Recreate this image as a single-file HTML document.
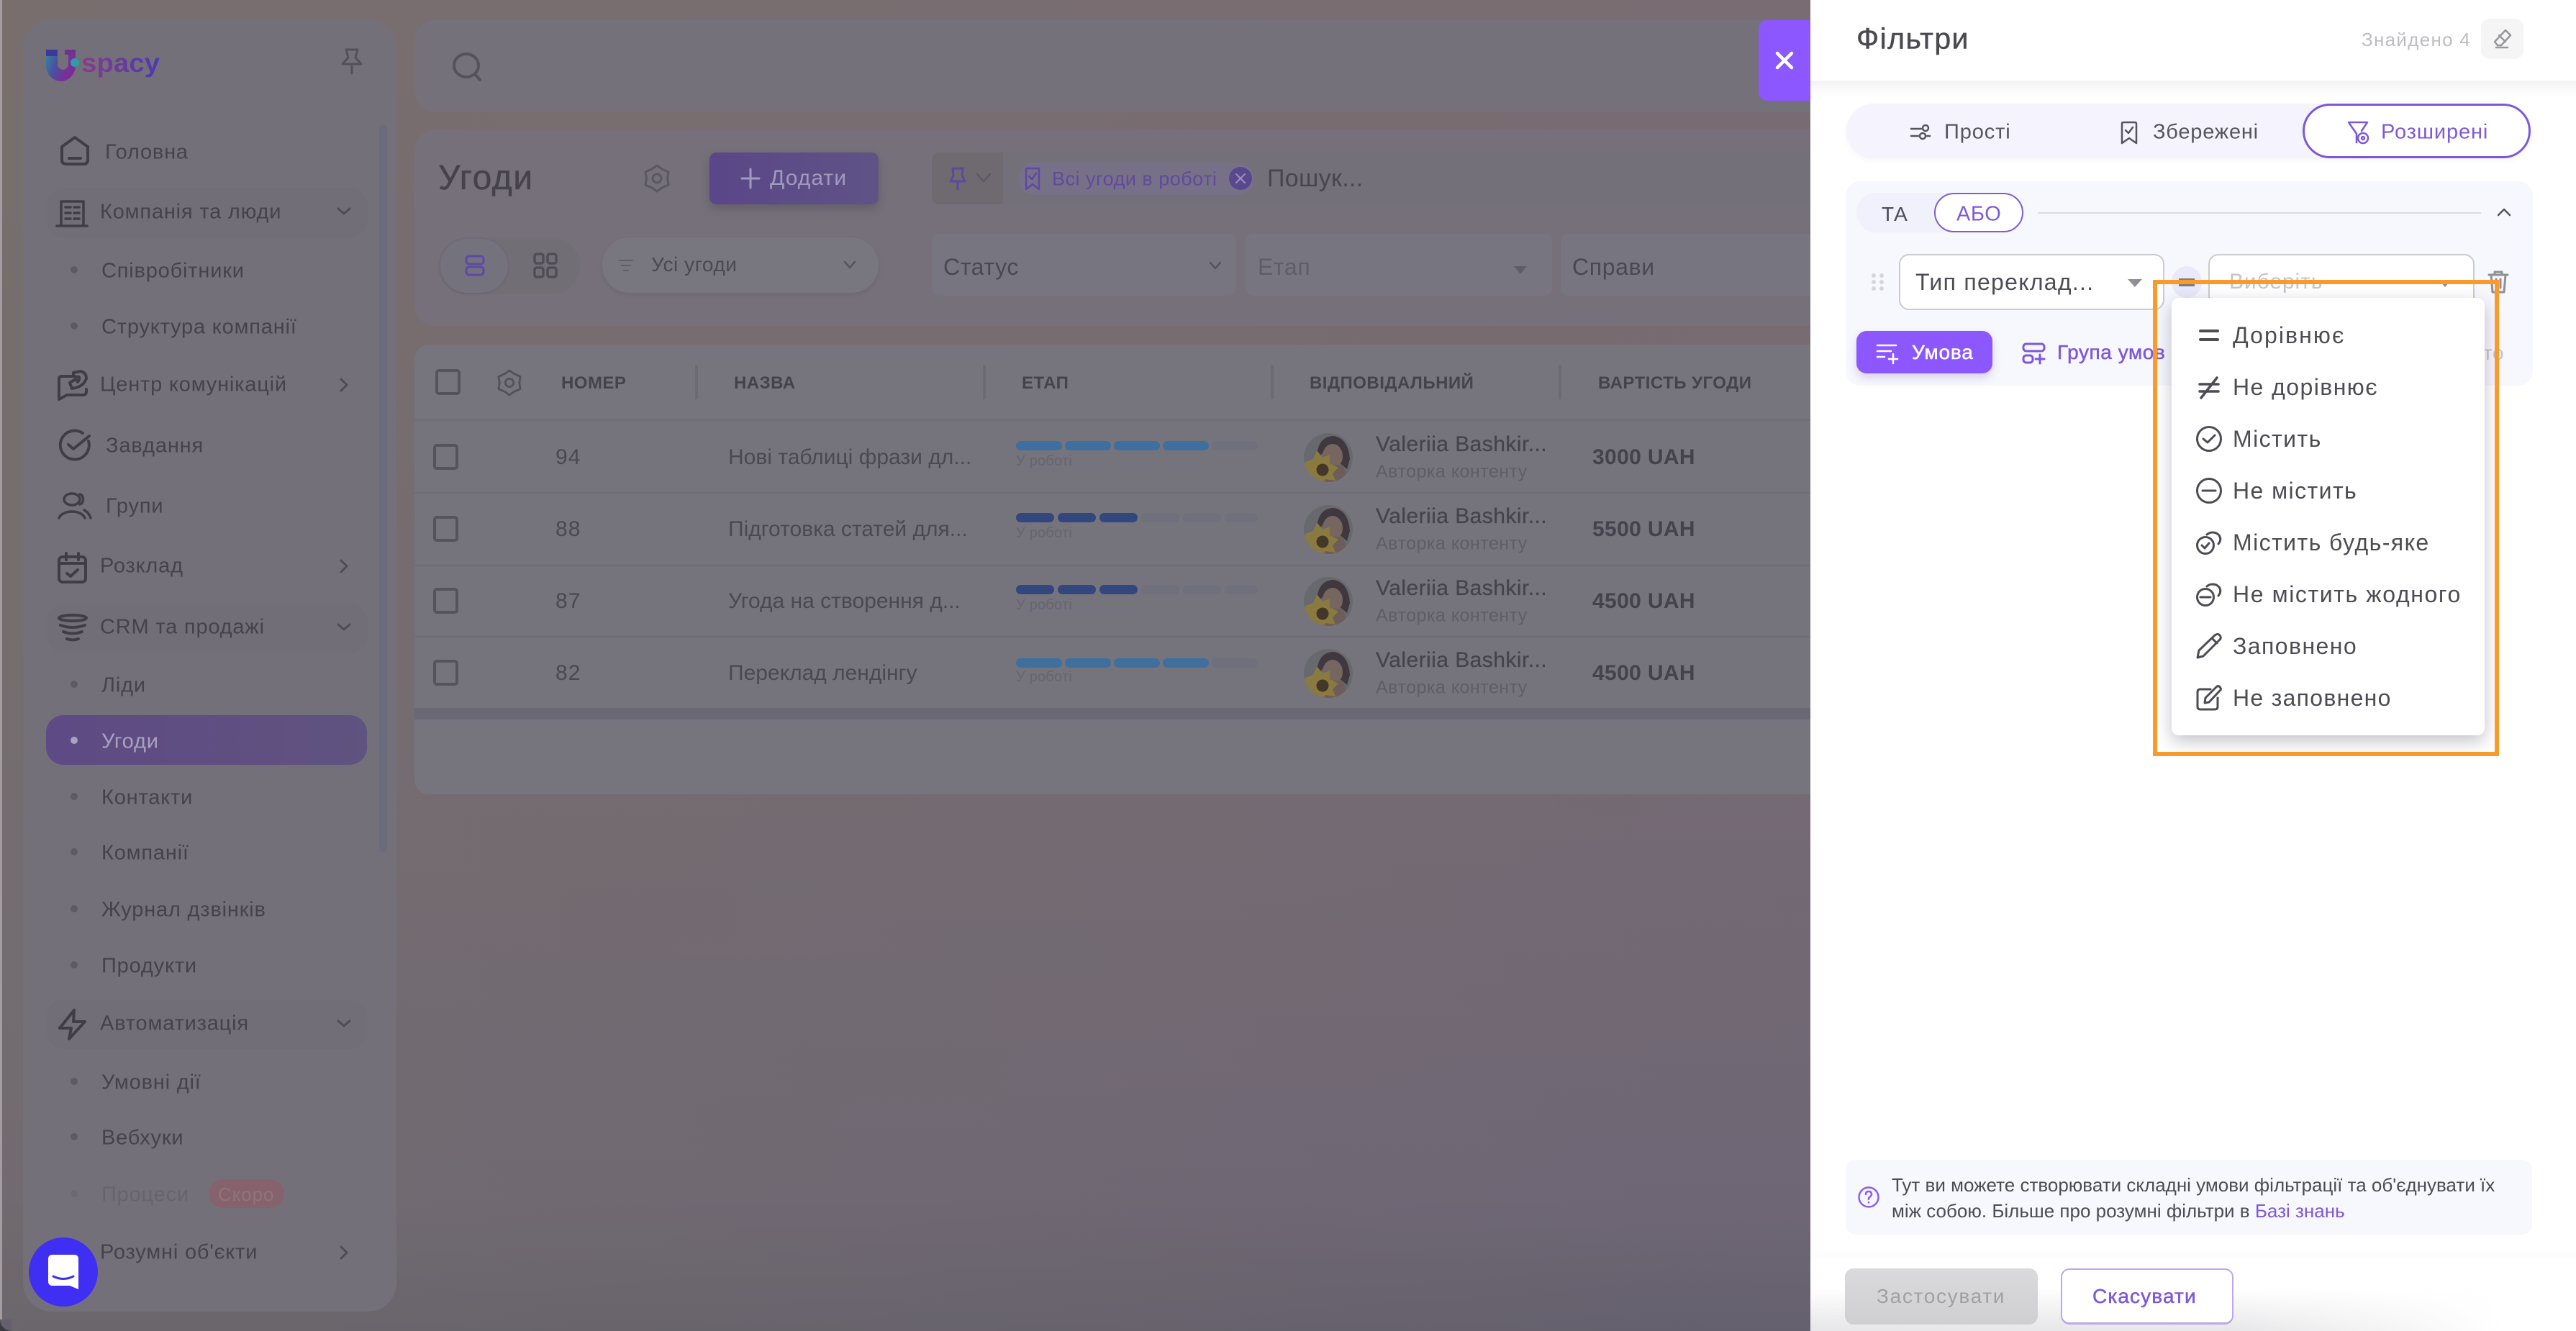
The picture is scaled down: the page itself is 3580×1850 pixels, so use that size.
<!DOCTYPE html>
<html lang="uk"><head><meta charset="utf-8"><title>Угоди</title>
<style>
*{box-sizing:border-box}
html,body{margin:0;padding:0;width:3580px;height:1850px;overflow:hidden}
body{position:relative;font-family:"Liberation Sans","Noto Sans CJK SC",sans-serif;background:linear-gradient(90deg,rgba(118,112,106,.45),rgba(122,106,118,.12) 65%,rgba(122,104,122,.2)),linear-gradient(180deg,#796d72 0,#776b70 25%,#746a73 55%,#6d6675 90%,#625f6c 100%)}
.a{position:absolute}
.t{position:absolute;white-space:nowrap;line-height:1;transform:translateY(-50%);letter-spacing:.035em}
svg{position:absolute;fill:none;stroke:currentColor;stroke-linecap:round;stroke-linejoin:round;overflow:visible}
.m{font-size:29px;color:#44424c;letter-spacing:.028em;margin-top:2px;margin-left:-2px}
.d{position:absolute;left:98px;width:10px;height:10px;border-radius:50%;background:#5c5a64;transform:translateY(-50%)}
.ck{position:absolute;width:35px;height:36px;border:4px solid #55535e;border-radius:5px}
.r{font-size:30px;color:#4a4852;margin-top:1px}
.rt{font-size:30px;color:#4a4852;margin-top:1px;letter-spacing:0}
.h{font-size:24px;font-weight:700;color:#44424c;letter-spacing:.02em;margin-top:1px}
.dv{position:absolute;top:507px;height:48px;width:4px;background:#6c6b75}
.ln{position:absolute;left:576px;width:1940px;height:2px;background:#6e6d77}
.seg{position:absolute;width:64px;height:13px;border-radius:7px}
.di{font-size:32px;color:#4c4c54;letter-spacing:.045em}
.md{-webkit-text-stroke:.5px currentColor}
.n{font-size:30px;color:#45434d;letter-spacing:.015em;-webkit-text-stroke:.3px currentColor}
.s{font-size:25px;color:#5f5e68;letter-spacing:.02em}
.v{font-size:30px;font-weight:700;color:#44424c;letter-spacing:.012em;margin-top:1px}
.y{font-size:20px;color:#66646f;letter-spacing:.01em}
.off{background:#6f707b}
</style></head>
<body>
<div class="a" style="left:0;top:0;width:3px;height:1850px;background:#a39ca1"></div>
<div class="a" style="left:0;top:1834px;width:16px;height:16px;background:#3a3a42"></div>
<div class="a" style="left:0;top:1834px;width:16px;height:16px;background:#63606c;border-radius:0 0 0 16px"></div>

<!-- sidebar -->
<div class="a" style="left:32px;top:27px;width:519px;height:1796px;border-radius:40px;background:#74707a"></div>
<svg style="left:60px;top:64px" width="60" height="56" viewBox="0 0 60 56">
<defs><linearGradient id="u" x1="0" y1="0" x2="1" y2="0.4"><stop offset="0" stop-color="#2f8c9d"/><stop offset=".45" stop-color="#4a4fa0"/><stop offset=".8" stop-color="#76309a"/><stop offset="1" stop-color="#7c2c95"/></linearGradient>
<linearGradient id="s" x1="0" y1="0" x2="1" y2="0"><stop offset="0" stop-color="#8a3a8c"/><stop offset="1" stop-color="#4a3bb0"/></linearGradient></defs>
<path d="M4 5H20V27A8 9 0 0 0 35 27V5H45V27A20.5 22 0 0 1 4 27Z" fill="url(#u)" stroke="none"/>
<path d="M4 5H20V14H4Z" fill="#3c3a98" stroke="none"/><path d="M30 5H45V12H30Z" fill="#74308f" stroke="none"/><circle cx="44" cy="23" r="6" fill="#2f9da5" stroke="none"/></svg>
<svg style="left:112px;top:64px;stroke:none" width="112" height="56"><text x="1" y="36" font-family="Liberation Sans" font-size="37" font-weight="700" textLength="109" lengthAdjust="spacingAndGlyphs" fill="url(#s)" stroke="none">spacy</text></svg>
<svg style="left:474px;top:66px;color:#53515c" width="30" height="38" viewBox="0 0 30 38" stroke-width="3"><path d="M7 3H23L20 14 28 23H2L10 14ZM15 23V36"/></svg>
<div class="a" style="left:527px;top:173px;width:11px;height:1012px;border-radius:6px;background:#6b6c7b"></div>

<div class="a" style="left:65px;top:261px;width:446px;height:69px;border-radius:24px;background:#726e78"></div>
<div class="a" style="left:65px;top:839px;width:446px;height:68px;border-radius:24px;background:#726e78"></div>
<div class="a" style="left:64px;top:1389px;width:446px;height:69px;border-radius:24px;background:#726e78"></div>
<div class="a" style="left:64px;top:994px;width:446px;height:69px;border-radius:24px;background:linear-gradient(90deg,#5e4a84,#60537f)"></div>

<svg style="left:84px;top:189px;color:#3f3d47" width="40" height="41" viewBox="0 0 40 41" stroke-width="4"><path d="M2 15L20 2 38 15V33Q38 39 32 39H8Q2 39 2 33ZM12 31H28"/></svg>
<svg style="left:78px;top:278px;color:#3f3d47" width="44" height="38" viewBox="0 0 44 38" stroke-width="3.5"><path d="M7 35V2H38V35M1 36H43M13 10H20M25 10H32M13 18H20M25 18H32M13 26H20M25 26H32"/></svg>
<svg style="left:80px;top:514px;color:#3f3d47" width="42" height="44" viewBox="0 0 42 44" stroke-width="4"><path d="M20 9H6Q2 9 2 13V41L13 35H35Q40 35 40 30V27M22 4L32 2Q40 4 40 12 36 24 20 26L17 18 25 13 28 17Q31 14 30 10L22 9Z"/></svg>
<svg style="left:81px;top:597px;color:#3f3d47" width="46" height="43" viewBox="0 0 46 43" stroke-width="4"><path d="M42 16A20 20 0 1 1 34 5M14 21L21 27 43 9"/></svg>
<svg style="left:81px;top:684px;color:#3f3d47" width="46" height="38" viewBox="0 0 46 38" stroke-width="3.5"><ellipse cx="19" cy="10" rx="11" ry="8"/><path d="M1 36C6 24 32 24 37 36M30 3C36 4 36 16 30 17M36 25C40 27 43 30 45 36"/></svg>
<svg style="left:80px;top:767px;color:#3f3d47" width="41" height="44" viewBox="0 0 41 44" stroke-width="4"><rect x="2" y="7" width="37" height="35" rx="5"/><path d="M12 2V11M29 2V11M2 16H39M13 30L18 34 28 25"/></svg>
<svg style="left:80px;top:852px;color:#3f3d47" width="42" height="42" viewBox="0 0 42 42" stroke-width="4"><ellipse cx="21" cy="7" rx="19" ry="4"/><path d="M4 17Q21 23 38 17M8 26Q21 31 34 26M13 36Q21 39 29 36"/></svg>
<svg style="left:81px;top:1402px;color:#3f3d47" width="40" height="44" viewBox="0 0 40 44" stroke-width="4"><path d="M22 2L2 27H18L15 42 37 18H21Z"/></svg>

<svg style="left:468px;top:288px;color:#4e4c57" width="20" height="12" viewBox="0 0 20 12" stroke-width="3"><path d="M2 2L10 9 18 2"/></svg>
<svg style="left:468px;top:866px;color:#4e4c57" width="20" height="12" viewBox="0 0 20 12" stroke-width="3"><path d="M2 2L10 9 18 2"/></svg>
<svg style="left:468px;top:1417px;color:#4e4c57" width="20" height="12" viewBox="0 0 20 12" stroke-width="3"><path d="M2 2L10 9 18 2"/></svg>
<svg style="left:472px;top:525px;color:#4e4c57" width="12" height="20" viewBox="0 0 12 20" stroke-width="3"><path d="M2 2L10 10 2 18"/></svg>
<svg style="left:472px;top:777px;color:#4e4c57" width="12" height="20" viewBox="0 0 12 20" stroke-width="3"><path d="M2 2L10 10 2 18"/></svg>
<svg style="left:472px;top:1731px;color:#4e4c57" width="12" height="20" viewBox="0 0 12 20" stroke-width="3"><path d="M2 2L10 10 2 18"/></svg>

<div class="t m" style="left:148px;top:210px">Головна</div>
<div class="t m" style="left:141px;top:293px">Компанія та люди</div>
<div class="d" style="top:375px"></div><div class="t m" style="left:143px;top:375px">Співробітники</div>
<div class="d" style="top:453px"></div><div class="t m" style="left:143px;top:453px">Структура компанії</div>
<div class="t m" style="left:141px;top:533px">Центр комунікацій</div>
<div class="t m" style="left:149px;top:618px">Завдання</div>
<div class="t m" style="left:149px;top:702px">Групи</div>
<div class="t m" style="left:141px;top:785px">Розклад</div>
<div class="t m" style="left:141px;top:870px">CRM та продажі</div>
<div class="d" style="top:951px"></div><div class="t m" style="left:143px;top:951px">Ліди</div>
<div class="d" style="top:1029px;background:#a8a2bf"></div><div class="t m" style="left:143px;top:1029px;color:#a8a2bf">Угоди</div>
<div class="d" style="top:1107px"></div><div class="t m" style="left:143px;top:1107px">Контакти</div>
<div class="d" style="top:1184px"></div><div class="t m" style="left:143px;top:1184px">Компанії</div>
<div class="d" style="top:1263px"></div><div class="t m" style="left:143px;top:1263px">Журнал дзвінків</div>
<div class="d" style="top:1341px"></div><div class="t m" style="left:143px;top:1341px">Продукти</div>
<div class="t m" style="left:141px;top:1421px">Автоматизація</div>
<div class="d" style="top:1503px"></div><div class="t m" style="left:143px;top:1503px">Умовні дії</div>
<div class="d" style="top:1580px"></div><div class="t m" style="left:143px;top:1580px">Вебхуки</div>
<div class="d" style="top:1659px;background:#6b6973"></div><div class="t m" style="left:143px;top:1659px;color:#66646e">Процеси</div>
<div class="a" style="left:290px;top:1639px;width:105px;height:40px;border-radius:20px;background:#85626c"></div>
<div class="t" style="left:303px;top:1660px;font-size:26px;color:#90747c">Скоро</div>
<div class="t m" style="left:141px;top:1739px">Розумні об'єкти</div>
<div class="a" style="left:40px;top:1720px;width:96px;height:96px;border-radius:50%;background:#3f2ff2"></div>
<svg style="left:67px;top:1744px;stroke:none" width="42" height="48" viewBox="0 0 42 48"><path d="M6 0H36Q42 0 42 6V48L30 43H6Q0 43 0 37V6Q0 0 6 0Z" fill="#fff"/><path d="M7 30Q21 37 35 30" fill="none" stroke="#3f2ff2" stroke-width="3"/></svg>

<!-- top search card -->
<div class="a" style="left:576px;top:28px;width:2000px;height:127px;border-radius:30px;background:#75717a"></div>
<svg style="left:629px;top:73px;color:#54525c" width="42" height="40" viewBox="0 0 42 40" stroke-width="4"><ellipse cx="19" cy="18" rx="17" ry="16"/><path d="M31 30L38 38"/></svg>

<!-- second card -->
<div class="a" style="left:576px;top:180px;width:2000px;height:273px;border-radius:30px;background:#75707a"></div>
<div class="t md" style="left:609px;top:248px;font-size:48px;color:#46424c;letter-spacing:.03em">Угоди</div>
<svg style="left:894px;top:228px;color:#5a5862" width="38" height="40" viewBox="0 0 38 40" stroke-width="3"><path d="M19 2L26 7 35 11 33.5 20 35 29 26 33 19 38 12 33 3 29 4.500 20 3 11 12 7Z"/><circle cx="19" cy="20" r="6"/></svg>
<div class="a" style="left:986px;top:212px;width:235px;height:72px;border-radius:10px;background:linear-gradient(90deg,#5a4688,#5f5386);box-shadow:0 6px 12px rgba(50,45,60,.25)"></div>
<svg style="left:1030px;top:232px;color:#a29abc" width="26" height="32" viewBox="0 0 26 32" stroke-width="3"><path d="M13 3V29M1 16H25"/></svg>
<div class="t" style="left:1070px;top:248px;font-size:30px;color:#a29abc">Додати</div>
<div class="a" style="left:1295px;top:212px;width:99px;height:72px;border-radius:10px 0 0 10px;background:#6f6a70"></div>
<div class="a" style="left:1394px;top:212px;width:1122px;height:72px;background:#737079"></div>
<svg style="left:1319px;top:232px;color:#5b49a0" width="24" height="32" viewBox="0 0 24 32" stroke-width="3"><path d="M5 2H19L18 12 22 20H2L6 12ZM12 20V31"/></svg>
<svg style="left:1356px;top:240px;color:#5c5a64" width="22" height="14" viewBox="0 0 22 14" stroke-width="2.5"><path d="M2 2L11 12 20 2"/></svg>
<div class="a" style="left:1415px;top:226px;width:328px;height:45px;border-radius:22px;background:#767187"></div>
<svg style="left:1424px;top:232px;color:#5e48a6" width="22" height="33" viewBox="0 0 22 33" stroke-width="2.5"><path d="M2 2H20V31L11 24 2 31ZM6 13L10 17 16 9"/></svg>
<div class="t" style="left:1462px;top:249px;font-size:27px;color:#62499c;letter-spacing:.018em">Всі угоди в роботі</div>
<div class="a" style="left:1708px;top:232px;width:32px;height:32px;border-radius:50%;background:#59488f"></div>
<svg style="left:1716px;top:240px;color:#9a90bb" width="16" height="16" viewBox="0 0 16 16" stroke-width="2"><path d="M2 2L14 14M14 2L2 14"/></svg>
<div class="t" style="left:1761px;top:248px;font-size:34px;color:#47454e;letter-spacing:.01em">Пошук...</div>

<div class="a" style="left:609px;top:330px;width:197px;height:79px;border-radius:40px;background:#726e76"></div>
<div class="a" style="left:612px;top:332px;width:94px;height:75px;border-radius:38px;background:#74727c;box-shadow:0 1px 3px rgba(70,60,100,.25)"></div>
<svg style="left:646px;top:354px;color:#5d4aa5" width="28" height="30" viewBox="0 0 28 30" stroke-width="3"><rect x="2" y="2" width="24" height="11" rx="4"/><rect x="2" y="17" width="24" height="11" rx="4"/></svg>
<svg style="left:741px;top:351px;color:#4f4d57" width="34" height="36" viewBox="0 0 34 36" stroke-width="3.5"><rect x="2" y="2" width="12" height="13" rx="3"/><rect x="20" y="2" width="12" height="13" rx="3"/><rect x="2" y="21" width="12" height="13" rx="3"/><rect x="20" y="21" width="12" height="13" rx="3"/></svg>
<div class="a" style="left:837px;top:330px;width:384px;height:77px;border-radius:38px;background:#787780;box-shadow:0 3px 6px rgba(60,55,65,.12)"></div>
<svg style="left:860px;top:360px;color:#5f5d67" width="20" height="18" viewBox="0 0 20 18" stroke-width="2"><path d="M1 2H19M4 9H16M7 16H13"/></svg>
<div class="t" style="left:905px;top:368px;font-size:28px;color:#4a4852;letter-spacing:.02em">Усі угоди</div>
<svg style="left:1172px;top:362px;color:#56545e" width="18" height="12" viewBox="0 0 18 12" stroke-width="2.5"><path d="M2 2L9 10 16 2"/></svg>

<div class="a" style="left:1295px;top:325px;width:423px;height:86px;border-radius:10px;background:#767580"></div>
<div class="t" style="left:1311px;top:371px;font-size:32px;color:#4a4852;letter-spacing:.02em">Статус</div>
<svg style="left:1680px;top:363px;color:#56545e" width="18" height="12" viewBox="0 0 18 12" stroke-width="2.5"><path d="M2 2L9 10 16 2"/></svg>
<div class="a" style="left:1731px;top:325px;width:426px;height:86px;border-radius:10px;background:#767580"></div>
<div class="t" style="left:1748px;top:371px;font-size:32px;color:#5f5e68;letter-spacing:.02em">Етап</div>
<div class="a" style="left:2104px;top:370px;width:0;height:0;border-left:9px solid transparent;border-right:9px solid transparent;border-top:11px solid #5f5e68"></div>
<div class="a" style="left:2169px;top:325px;width:347px;height:86px;border-radius:10px 0 0 10px;background:#767580"></div>
<div class="t" style="left:2185px;top:371px;font-size:32px;color:#4a4852;letter-spacing:.02em">Справи</div>

<!-- table -->
<div class="a" style="left:576px;top:479px;width:2000px;height:625px;border-radius:20px;background:#76757e"></div>
<div class="a" style="left:576px;top:584px;width:1940px;height:400px;background:#75747d"></div>
<div class="ln" style="top:583px"></div><div class="ln" style="top:684px"></div><div class="ln" style="top:785px"></div><div class="ln" style="top:884px"></div>
<div class="a" style="left:576px;top:984px;width:1940px;height:16px;background:#696873"></div>
<div class="ck" style="left:605px;top:513px"></div>
<svg style="left:690px;top:513px;color:#53515b" width="36" height="38" viewBox="0 0 38 40" stroke-width="3"><path d="M19 2L26 7 35 11 33.5 20 35 29 26 33 19 38 12 33 3 29 4.500 20 3 11 12 7Z"/><circle cx="19" cy="20" r="6"/></svg>
<div class="t h" style="left:780px;top:532px">НОМЕР</div>
<div class="dv" style="left:966px"></div>
<div class="t h" style="left:1020px;top:532px">НАЗВА</div>
<div class="dv" style="left:1366px"></div>
<div class="t h" style="left:1420px;top:532px">ЕТАП</div>
<div class="dv" style="left:1766px"></div>
<div class="t h" style="left:1820px;top:532px">ВІДПОВІДАЛЬНИЙ</div>
<div class="dv" style="left:2166px"></div>
<div class="t h" style="left:2221px;top:532px">ВАРТІСТЬ УГОДИ</div>

<div class="ck" style="left:602px;top:617px"></div>
<div class="t r" style="left:772px;top:635px">94</div>
<div class="t rt" style="left:1012px;top:635px">Нові таблиці фрази дл...</div>
<div class="seg" style="left:1412px;top:613px;background:#3f6f9f"></div><div class="seg" style="left:1480px;top:613px;background:#3f6f9f"></div><div class="seg" style="left:1548px;top:613px;background:#3f6f9f"></div><div class="seg" style="left:1616px;top:613px;background:#3f6f9f"></div><div class="seg off" style="left:1684px;top:613px"></div>
<div class="t y" style="left:1412px;top:641px">У роботі</div>

<div class="ck" style="left:602px;top:717px"></div>
<div class="t r" style="left:772px;top:735px">88</div>
<div class="t rt" style="left:1012px;top:735px">Підготовка статей для...</div>
<div class="seg" style="left:1412px;top:713px;width:53px;background:#33477f"></div><div class="seg" style="left:1470px;top:713px;width:53px;background:#33477f"></div><div class="seg" style="left:1528px;top:713px;width:53px;background:#33477f"></div><div class="seg off" style="left:1586px;top:713px;width:53px"></div><div class="seg off" style="left:1644px;top:713px;width:53px"></div><div class="seg off" style="left:1702px;top:713px;width:46px"></div>
<div class="t y" style="left:1412px;top:741px">У роботі</div>

<div class="ck" style="left:602px;top:817px"></div>
<div class="t r" style="left:772px;top:835px">87</div>
<div class="t rt" style="left:1012px;top:835px">Угода на створення д...</div>
<div class="seg" style="left:1412px;top:813px;width:53px;background:#33477f"></div><div class="seg" style="left:1470px;top:813px;width:53px;background:#33477f"></div><div class="seg" style="left:1528px;top:813px;width:53px;background:#33477f"></div><div class="seg off" style="left:1586px;top:813px;width:53px"></div><div class="seg off" style="left:1644px;top:813px;width:53px"></div><div class="seg off" style="left:1702px;top:813px;width:46px"></div>
<div class="t y" style="left:1412px;top:841px">У роботі</div>

<div class="ck" style="left:602px;top:917px"></div>
<div class="t r" style="left:772px;top:935px">82</div>
<div class="t rt" style="left:1012px;top:935px">Переклад лендінгу</div>
<div class="seg" style="left:1412px;top:915px;background:#3f6f9f"></div><div class="seg" style="left:1480px;top:915px;background:#3f6f9f"></div><div class="seg" style="left:1548px;top:915px;background:#3f6f9f"></div><div class="seg" style="left:1616px;top:915px;background:#3f6f9f"></div><div class="seg off" style="left:1684px;top:915px"></div>
<div class="t y" style="left:1412px;top:941px">У роботі</div>

<svg width="0" height="0" style="left:0;top:0"><defs><clipPath id="avc"><circle cx="34" cy="34" r="34"/></clipPath><g id="av" stroke="none" clip-path="url(#avc)"><rect width="68" height="68" fill="#68686f"/><path d="M18 32Q20 4 42 4 62 8 64 36L60 50 48 40 48 24Q34 18 22 32Z" fill="#3f393f"/><ellipse cx="40" cy="32" rx="14" ry="17" fill="#77655f"/><path d="M34 44L54 44 58 58 50 68H30Z" fill="#6d5c58"/><path d="M2 40L13 36 18 24 26 34 36 30 36 42 48 48 40 56 44 66 30 64 22 72 14 64 2 64 6 54 0 48Z" fill="#8a7a3f"/><circle cx="26" cy="51" r="8.500" fill="#423728"/></g></defs></svg>
<svg style="left:1812px;top:602px" width="68" height="68" viewBox="0 0 68 68"><use href="#av"/></svg>
<svg style="left:1812px;top:702px" width="68" height="68" viewBox="0 0 68 68"><use href="#av"/></svg>
<svg style="left:1812px;top:802px" width="68" height="68" viewBox="0 0 68 68"><use href="#av"/></svg>
<svg style="left:1812px;top:902px" width="68" height="68" viewBox="0 0 68 68"><use href="#av"/></svg>
<div class="t n" style="left:1912px;top:618px">Valeriia Bashkir...</div>
<div class="t s" style="left:1912px;top:656px">Авторка контенту</div>
<div class="t n" style="left:1912px;top:718px">Valeriia Bashkir...</div>
<div class="t s" style="left:1912px;top:756px">Авторка контенту</div>
<div class="t n" style="left:1912px;top:818px">Valeriia Bashkir...</div>
<div class="t s" style="left:1912px;top:856px">Авторка контенту</div>
<div class="t n" style="left:1912px;top:918px">Valeriia Bashkir...</div>
<div class="t s" style="left:1912px;top:956px">Авторка контенту</div>
<div class="t v" style="left:2213px;top:635px">3000 UAH</div>
<div class="t v" style="left:2213px;top:735px">5500 UAH</div>
<div class="t v" style="left:2213px;top:835px">4500 UAH</div>
<div class="t v" style="left:2213px;top:935px">4500 UAH</div>

<!-- close tab -->
<div class="a" style="left:2444px;top:28px;width:72px;height:112px;border-radius:12px 0 0 12px;background:#8c57ff"></div>
<svg style="left:2467px;top:71px;color:#fff" width="26" height="26" viewBox="0 0 26 26" stroke-width="4.500"><path d="M3 3L23 23M23 3L3 23"/></svg>

<!-- panel -->
<div class="a" style="left:2516px;top:0;width:1064px;height:1850px;background:#fff"></div>
<div class="a" style="left:2516px;top:112px;width:1064px;height:22px;background:linear-gradient(180deg,#f2f2f4,#fff)"></div>
<div class="t md" style="left:2580px;top:54px;font-size:41px;color:#4a4a50;letter-spacing:.035em">Фільтри</div>
<div class="t" style="left:3282px;top:55px;font-size:26px;color:#bdbdc1;letter-spacing:.05em">Знайдено 4</div>
<div class="a" style="left:3448px;top:26px;width:59px;height:56px;border-radius:12px;background:#f5f5f6"></div>
<svg style="left:3465px;top:40px;color:#97979c" width="26" height="28" viewBox="0 0 26 28" stroke-width="2.5"><path d="M17 2L24 9 11 23H6L2 18ZM8 9L17 18M4 26H20"/></svg>

<div class="a" style="left:2566px;top:144px;width:951px;height:76px;border-radius:38px;background:#f5f3fd;box-shadow:0 4px 8px rgba(120,110,160,.06)"></div>
<div class="a" style="left:3200px;top:144px;width:317px;height:76px;border-radius:38px;background:#fff;border:3px solid #7e58d8"></div>
<svg style="left:2654px;top:172px;color:#55555c" width="30" height="22" viewBox="0 0 30 22" stroke-width="2.5"><path d="M2 7H16M2 17H12M24 17H28"/><circle cx="22" cy="6" r="4"/><circle cx="18" cy="17" r="4"/></svg>
<div class="t" style="left:2702px;top:184px;font-size:29px;color:#55555c;letter-spacing:.03em">Прості</div>
<svg style="left:2947px;top:168px;color:#55555c" width="24" height="34" viewBox="0 0 24 34" stroke-width="2.5"><path d="M2 4Q2 2 4 2H20Q22 2 22 4V31L12 24 2 31ZM7 13L11 17 17 9"/></svg>
<div class="t" style="left:2992px;top:184px;font-size:29px;color:#55555c;letter-spacing:.027em">Збережені</div>
<svg style="left:3262px;top:168px;color:#7e58d8" width="32" height="34" viewBox="0 0 32 34" stroke-width="2.5"><path d="M2 2H28L20 14M2 2L13 18V30"/><circle cx="22" cy="24" r="7"/><circle cx="22" cy="24" r="2"/></svg>
<div class="t" style="left:3309px;top:184px;font-size:29px;color:#7e58d8;letter-spacing:.03em">Розширені</div>

<div class="a" style="left:2565px;top:252px;width:955px;height:284px;border-radius:20px;background:#f7f7fe"></div>
<div class="a" style="left:2580px;top:268px;width:232px;height:55px;border-radius:28px;background:#f0f1fc"></div>
<div class="a" style="left:2688px;top:268px;width:124px;height:55px;border-radius:28px;background:#fff;border:2px solid #7e5ed4"></div>
<div class="t" style="left:2615px;top:298px;font-size:28px;color:#4c4c54">ТА</div>
<div class="t" style="left:2719px;top:298px;font-size:29px;color:#7e58d8;letter-spacing:.02em">АБО</div>
<div class="a" style="left:2832px;top:295px;width:616px;height:2px;background:#dadbe8"></div>
<svg style="left:3470px;top:289px;color:#55555c" width="20" height="12" viewBox="0 0 20 12" stroke-width="2.5"><path d="M2 10L10 2 18 10"/></svg>

<svg style="left:2601px;top:380px;color:#d5d5dc;stroke:none" width="17" height="25" viewBox="0 0 17 25"><g fill="#d5d5dc"><circle cx="3" cy="3" r="3"/><circle cx="14" cy="3" r="3"/><circle cx="3" cy="12" r="3"/><circle cx="14" cy="12" r="3"/><circle cx="3" cy="21" r="3"/><circle cx="14" cy="21" r="3"/></g></svg>
<div class="a" style="left:2639px;top:353px;width:369px;height:78px;border-radius:14px;background:#fff;border:2px solid #cbcbce"></div>
<div class="t" style="left:2662px;top:392px;font-size:32px;color:#4c4c54;letter-spacing:.04em">Тип переклад...</div>
<div class="a" style="left:2957px;top:388px;width:0;height:0;border-left:10px solid transparent;border-right:10px solid transparent;border-top:11px solid #8f8f96"></div>

<div class="a" style="left:3018px;top:370px;width:42px;height:44px;border-radius:50%;background:#e9e9fb"></div>
<div class="a" style="left:3028px;top:387px;width:22px;height:4px;background:#7b7b84"></div>
<div class="a" style="left:3028px;top:394px;width:22px;height:4px;background:#7b7b84"></div>
<div class="a" style="left:3069px;top:353px;width:370px;height:78px;border-radius:14px;background:#fff;border:2px solid #cbcbce"></div>
<div class="t" style="left:3098px;top:392px;font-size:30px;color:#c5c5c9;letter-spacing:.03em">Виберіть</div>
<div class="a" style="left:3391px;top:391px;width:0;height:0;border-left:7px solid transparent;border-right:7px solid transparent;border-top:8px solid #8f8f96"></div>
<svg style="left:3457px;top:376px;color:#8f8f96" width="30" height="32" viewBox="0 0 30 32" stroke-width="3"><path d="M2 6H28M10 6V2H20V6M5 6L7 30H23L25 6M12 12V24M18 12V24"/></svg>

<div class="a" style="left:2580px;top:460px;width:189px;height:59px;border-radius:14px;background:#8c57ff;box-shadow:0 6px 12px rgba(90,60,160,.2)"></div>
<svg style="left:2608px;top:478px;color:#fff" width="30" height="28" viewBox="0 0 30 28" stroke-width="2.5"><path d="M1 2H27M1 10H20M1 18H11M23 14V27M17 21H29"/></svg>
<div class="t md" style="left:2657px;top:490px;font-size:28px;color:#fff;letter-spacing:.03em">Умова</div>
<svg style="left:2810px;top:476px;color:#7e58d8" width="33" height="30" viewBox="0 0 33 30" stroke-width="3"><rect x="2" y="2" width="29" height="10" rx="4"/><rect x="2" y="18" width="13" height="10" rx="4"/><path d="M25 17V29M19 23H31"/></svg>
<div class="t md" style="left:2859px;top:490px;font-size:28px;color:#7e58d8;letter-spacing:.02em">Група умов</div>
<div class="t" style="left:3438px;top:491px;font-size:28px;color:#c4c4cc;letter-spacing:.02em">ьто</div>

<!-- dropdown -->
<div class="a" style="left:3018px;top:414px;width:435px;height:608px;border-radius:10px;background:#fff;box-shadow:0 8px 24px rgba(40,40,60,.28)"></div>
<svg style="left:3052px;top:450px;color:#4c4c54" width="36" height="36" viewBox="0 0 36 36" stroke-width="4"><path d="M6 10H30M6 22H30"/></svg>
<svg style="left:3052px;top:520px;color:#4c4c54" width="36" height="36" viewBox="0 0 36 36" stroke-width="3.5"><path d="M5 14H31M5 24H31M29 5L7 33"/></svg>
<svg style="left:3052px;top:592px;color:#4c4c54" width="36" height="36" viewBox="0 0 36 36" stroke-width="3"><circle cx="18" cy="18" r="16.5"/><path d="M10 18L16 23 26 13"/></svg>
<svg style="left:3052px;top:664px;color:#4c4c54" width="36" height="36" viewBox="0 0 36 36" stroke-width="3"><circle cx="18" cy="18" r="16.5"/><path d="M9 18H27"/></svg>
<svg style="left:3052px;top:736px;color:#4c4c54" width="36" height="36" viewBox="0 0 36 36" stroke-width="3"><circle cx="13" cy="22" r="11.5"/><path d="M8 22L12 26 18 19M15 7A12 12 0 0 1 32 8Q36 14 31 20"/></svg>
<svg style="left:3052px;top:808px;color:#4c4c54" width="36" height="36" viewBox="0 0 36 36" stroke-width="3"><circle cx="13" cy="22" r="11.5"/><path d="M6 22H20M15 7A12 12 0 0 1 32 8Q36 14 31 20"/></svg>
<svg style="left:3052px;top:880px;color:#4c4c54" width="36" height="36" viewBox="0 0 36 36" stroke-width="3"><path d="M2 34L4 24 26 3Q30 0 33 3 36 7 32 10L10 32ZM22 7L29 14"/></svg>
<svg style="left:3052px;top:952px;color:#4c4c54" width="36" height="36" viewBox="0 0 36 36" stroke-width="3"><path d="M20 6H6Q2 6 2 10V30Q2 34 6 34H26Q30 34 30 30V18M12 25L13 18 28 3Q31 0 33 3 36 6 33 8L18 24Z"/></svg>
<div class="t di" style="left:3103px;top:466px;letter-spacing:.065em">Дорівнює</div>
<div class="t di" style="left:3103px;top:538px">Не дорівнює</div>
<div class="t di" style="left:3103px;top:610px">Містить</div>
<div class="t di" style="left:3103px;top:682px">Не містить</div>
<div class="t di" style="left:3103px;top:754px">Містить будь-яке</div>
<div class="t di" style="left:3103px;top:826px;letter-spacing:.05em">Не містить жодного</div>
<div class="t di" style="left:3103px;top:898px">Заповнено</div>
<div class="t di" style="left:3103px;top:970px;letter-spacing:.04em">Не заповнено</div>

<!-- orange highlight -->
<div class="a" style="left:2992px;top:389px;width:481px;height:662px;border:6px solid #f99a2b"></div>

<!-- info -->
<div class="a" style="left:2565px;top:1612px;width:954px;height:104px;border-radius:14px;background:#f7f7fe"></div>
<svg style="left:2582px;top:1649px;color:#8a5ff0" width="30" height="30" viewBox="0 0 30 30" stroke-width="2.5"><circle cx="15" cy="15" r="13.5"/><path d="M11 11Q11 7 15 7 19 7 19 11 19 13 15 16V18M15 22V22.5"/></svg>
<div class="t" style="left:2629px;top:1647px;font-size:26px;color:#4c4c54;letter-spacing:0">Тут ви можете створювати складні умови фільтрації та об'єднувати їх</div>
<div class="t" style="left:2629px;top:1683px;font-size:26px;color:#4c4c54;letter-spacing:0">між собою. Більше про розумні фільтри в <span style="color:#7e58d8">Базі знань</span></div>

<!-- footer -->
<div class="a" style="left:2516px;top:1735px;width:1064px;height:14px;background:linear-gradient(180deg,#fff,#fbfbfc)"></div>
<div class="a" style="left:2516px;top:1790px;width:960px;height:60px;background:linear-gradient(180deg,rgba(230,230,232,0),#e6e6e8);-webkit-mask-image:linear-gradient(90deg,#000 60%,transparent);mask-image:linear-gradient(90deg,#000 60%,transparent)"></div>
<div class="a" style="left:2564px;top:1763px;width:268px;height:78px;border-radius:12px;background:linear-gradient(180deg,#dadadc,#cfcfd1)"></div>
<div class="t" style="left:2608px;top:1802px;font-size:28px;color:#a0a0a4;letter-spacing:.06em">Застосувати</div>
<div class="a" style="left:2864px;top:1763px;width:240px;height:78px;border-radius:12px;background:#fff;border:2px solid #bda6ea;border-bottom-width:3px"></div>
<div class="t md" style="left:2908px;top:1802px;font-size:28px;color:#7e58d8;letter-spacing:.04em">Скасувати</div>
</body></html>
